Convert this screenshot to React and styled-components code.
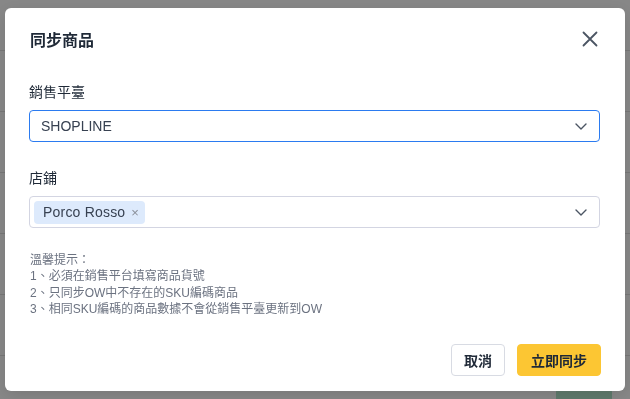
import React from 'react';
import styled, { createGlobalStyle } from 'styled-components';

const GlobalStyle = createGlobalStyle`
  html, body {
    margin: 0;
    padding: 0;
    width: 630px;
    height: 399px;
    overflow: hidden;
    background: #fff;
    font-family: "Liberation Sans", "Noto Sans CJK TC", sans-serif;
  }
`;

const tips = [
  '溫馨提示：',
  '1、必須在銷售平台填寫商品貨號',
  '2、只同步OW中不存在的SKU編碼商品',
  '3、相同SKU編碼的商品數據不會從銷售平臺更新到OW',
];

function Chevron() {
  return (
    <svg width="12" height="7" viewBox="0 0 12 7" fill="none">
      <path d="M1 1l5 5 5-5" stroke="#4b5563" strokeWidth="1.4" strokeLinecap="round" strokeLinejoin="round" />
    </svg>
  );
}

function CloseIcon() {
  return (
    <svg width="16" height="16" viewBox="0 0 16 16" fill="none">
      <path d="M1.5 1.5l13 13M14.5 1.5l-13 13" stroke="#4b5563" strokeWidth="1.8" strokeLinecap="round" />
    </svg>
  );
}

export default function App() {
  return (
    <>
      <GlobalStyle />
      <Page>
        {[0, 1, 2, 3, 4, 5].map((i) => (
          <Row key={i} first={i === 0} />
        ))}
        <Footer>
          <GreenButton />
        </Footer>
      </Page>

      <Overlay>
        <Modal>
          <Header>
            <Title>同步商品</Title>
            <CloseButton>
              <CloseIcon />
            </CloseButton>
          </Header>
          <Body>
            <Field>
              <Label>銷售平臺</Label>
              <Select focused>
                <Value>SHOPLINE</Value>
                <Chevron />
              </Select>
            </Field>
            <Field>
              <Label>店鋪</Label>
              <Select>
                <Tag>
                  Porco Rosso <TagClose>×</TagClose>
                </Tag>
                <Chevron />
              </Select>
            </Field>
            <Hint>
              {tips.map((t) => (
                <div key={t}>{t}</div>
              ))}
            </Hint>
          </Body>
          <Actions>
            <Button>取消</Button>
            <Button primary>立即同步</Button>
          </Actions>
        </Modal>
      </Overlay>
    </>
  );
}

const Page = styled.div`
  display: flex;
  flex-direction: column;
  height: 399px;
  background: #fff;
`;

const Row = styled.div`
  height: ${(p) => (p.first ? '50px' : '60px')};
  flex-shrink: 0;
  border-bottom: 1px solid #e2e2e2;
`;

const Footer = styled.div`
  flex: 1;
  display: flex;
  justify-content: flex-end;
  align-items: flex-end;
  padding-right: 18px;
`;

const GreenButton = styled.div`
  width: 56px;
  height: 30px;
  margin-bottom: -15px;
  border-radius: 8px;
  background: #b3e6cc;
`;

const Overlay = styled.div`
  position: fixed;
  inset: 0;
  background: rgba(0, 0, 0, 0.47);
  display: flex;
  align-items: flex-start;
  padding: 8px 5px;
`;

const Modal = styled.div`
  width: 620px;
  height: 383px;
  box-sizing: border-box;
  background: #fff;
  border-radius: 6px;
  display: flex;
  flex-direction: column;
  box-shadow: 0 4px 16px rgba(0, 0, 0, 0.12);
`;

const Header = styled.div`
  height: 62px;
  flex-shrink: 0;
  display: flex;
  align-items: center;
  justify-content: space-between;
  padding: 0 27px 0 25px;
`;

const Title = styled.h2`
  margin: 0;
  font-size: 16px;
  font-weight: 600;
  color: #1f2937;
`;

const CloseButton = styled.button`
  border: 0;
  background: none;
  padding: 0;
  display: flex;
  cursor: pointer;
`;

const Body = styled.div`
  flex: 1;
  padding: 12px 25px 0 24px;
  display: flex;
  flex-direction: column;
  gap: 26px;
`;

const Field = styled.div`
  display: flex;
  flex-direction: column;
  gap: 8px;
`;

const Label = styled.label`
  font-size: 14px;
  line-height: 20px;
  color: #1f2937;
`;

const Select = styled.div`
  height: 32px;
  box-sizing: border-box;
  border: 1px solid ${(p) => (p.focused ? '#2b7bf0' : '#d3d5e2')};
  border-radius: 4px;
  display: flex;
  align-items: center;
  justify-content: space-between;
  padding: 0 12px 0 4px;
  background: #fff;
`;

const Value = styled.span`
  font-size: 14px;
  color: #374151;
  padding-left: 7px;
`;

const Tag = styled.span`
  display: inline-flex;
  align-items: center;
  gap: 6px;
  height: 23px;
  padding: 0 6px 0 9px;
  border-radius: 4px;
  background: #ddeafc;
  font-size: 14px;
  letter-spacing: 0.2px;
  color: #374151;
`;

const TagClose = styled.span`
  font-size: 13px;
  color: #8a8f99;
  margin-top: 1px;
`;

const Hint = styled.div`
  margin-top: -2px;
  font-size: 12px;
  line-height: 16.3px;
  color: #6b7280;
  padding-left: 1px;
`;

const Actions = styled.div`
  display: flex;
  justify-content: flex-end;
  gap: 12px;
  padding: 0 24px 15px;
`;

const Button = styled.button`
  height: 32px;
  padding: 0 ${(p) => (p.primary ? '13px' : '12px')};
  border-radius: 4px;
  border: 1px solid ${(p) => (p.primary ? '#fcc633' : '#d8dbe3')};
  background: ${(p) => (p.primary ? '#fcc633' : '#fff')};
  color: #1f2937;
  font-family: inherit;
  font-size: 14px;
  font-weight: 600;
  cursor: pointer;
`;
